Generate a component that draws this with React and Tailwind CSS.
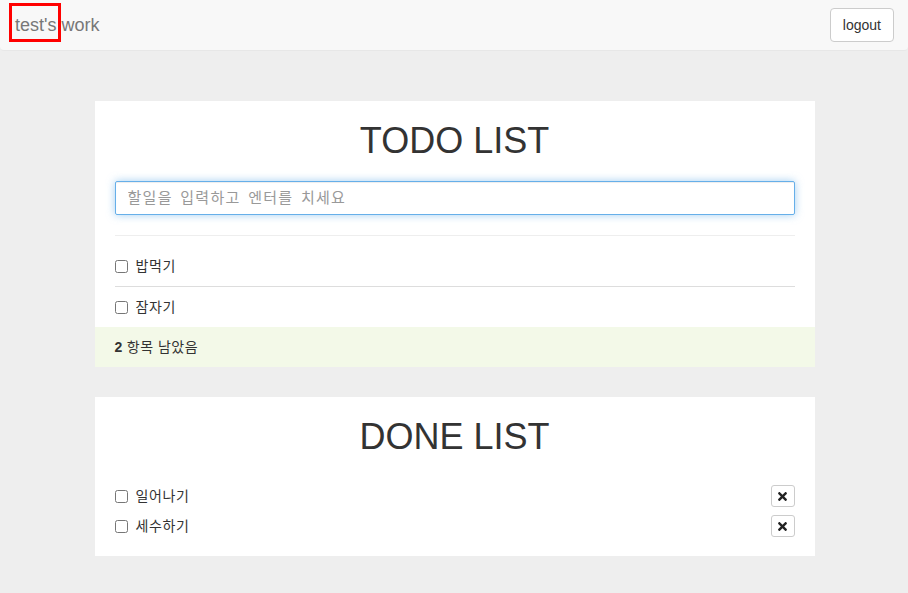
import React, { useState } from 'react';
import { FaTimes } from 'react-icons/fa';

const font = { fontFamily: '"Liberation Sans", "Noto Sans CJK KR", sans-serif' };

const App = () => {
  const [todos] = useState([
    { id: 1, text: '밥먹기' },
    { id: 2, text: '잠자기' },
  ]);
  const [dones] = useState([
    { id: 3, text: '일어나기' },
    { id: 4, text: '세수하기' },
  ]);

  return (
    <div className="min-h-[593px] bg-[#eeeeee] text-[14px] text-[#333]" style={font}>
      <nav className="h-[51px] bg-[#f8f8f8] border-b border-[#e7e7e7] rounded-b-[4px] flex items-center justify-between pl-[15px] pr-[14px]">
        <div className="relative text-[18px] leading-[20px] text-[#777]">
          <span className="absolute left-[-6px] top-[-12px] w-[52px] h-[39px] border-[3px] border-[#ff0000]"></span>
          test's work
        </div>
        <button className="h-[34px] px-[12px] bg-white border border-[#ccc] rounded-[4px] text-[14px] text-[#333]">
          logout
        </button>
      </nav>

      <div className="w-[720px] mx-auto pt-[50px] pl-[1px] box-content">
        <div className="bg-white">
          <div className="px-[20px]">
            <h1 className="text-[36px] leading-[40px] text-center text-[#333] pt-[20px] pb-[20px]">TODO LIST</h1>
            <input
              className="w-full h-[34px] px-[12px] border border-[#66afe9] rounded-[2px] outline-none shadow-[inset_0_1px_1px_rgba(0,0,0,0.075),0_0_8px_rgba(102,175,233,0.6)] placeholder:text-[#999] placeholder:text-[15px] placeholder:tracking-[1.3px] placeholder:[word-spacing:2px] text-[14px]"
              placeholder="할일을 입력하고 엔터를 치세요"
            />
            <div className="mt-[20px] border-t border-[#eee]"></div>
            <ul className="mt-[11px]">
              {todos.map((t, i) => (
                <li
                  key={t.id}
                  className={`h-[40px] flex items-center ${i < todos.length - 1 ? 'border-b border-[#ddd]' : ''}`}
                >
                  <input type="checkbox" className="w-[13px] h-[13px] mr-[8px]" />
                  <span className="tracking-[0.6px]">{t.text}</span>
                </li>
              ))}
            </ul>
          </div>
          <div className="h-[40px] bg-[#f3f9e8] flex items-center px-[20px] tracking-[0.5px]">
            <b className="mr-[4px]">{todos.length}</b> 항목 남았음
          </div>
        </div>

        <div className="bg-white mt-[30px] px-[20px] pb-[15px]">
          <h1 className="text-[36px] leading-[40px] text-center text-[#333] pt-[20px] pb-[24px]">DONE LIST</h1>
          <ul>
            {dones.map((d) => (
              <li key={d.id} className="h-[30px] flex items-center">
                <input type="checkbox" className="w-[13px] h-[13px] mr-[8px]" />
                <span className="flex-1 tracking-[0.6px]">{d.text}</span>
                <button className="w-[24px] h-[22px] border border-[#ccc] rounded-[3px] bg-white flex items-center justify-center">
                  <FaTimes className="text-[13px] text-[#222]" />
                </button>
              </li>
            ))}
          </ul>
        </div>
      </div>
    </div>
  );
};

export default App;
